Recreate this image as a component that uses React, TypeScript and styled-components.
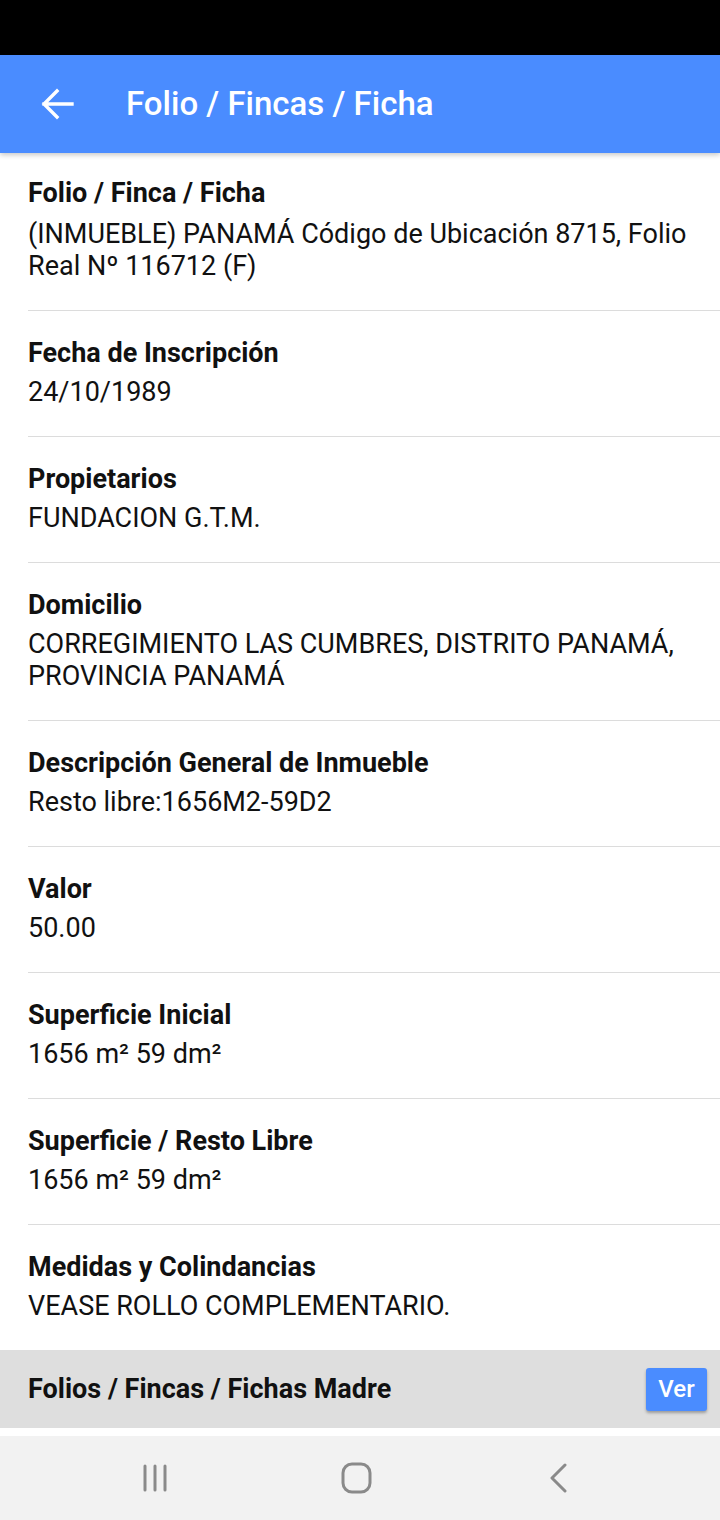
import React from "react";
import styled, { createGlobalStyle } from "styled-components";

const Global = createGlobalStyle`
  html, body { margin: 0; padding: 0; background: #ffffff; }
  body { font-family: Roboto, "Noto Sans", sans-serif; -webkit-font-smoothing: antialiased; }
  * { box-sizing: border-box; }
`;

const Screen = styled.div`
  width: 720px;
  height: 1520px;
  display: flex;
  flex-direction: column;
  background: #ffffff;
  overflow: hidden;
`;

const StatusBar = styled.div`
  height: 55px;
  flex: none;
  background: #000000;
`;

const Header = styled.header`
  height: 98px;
  flex: none;
  display: flex;
  align-items: center;
  background: #4a8cff;
  box-shadow: 0 2px 5px rgba(0, 0, 0, 0.22);
  position: relative;
  z-index: 2;
`;

const BackButton = styled.button`
  width: 126px;
  height: 98px;
  padding: 0 0 0 40px;
  border: 0;
  background: transparent;
  display: flex;
  align-items: center;
  cursor: pointer;
`;

const Title = styled.h1`
  margin: 0;
  color: #ffffff;
  font-size: 33px;
  font-weight: 500;
  line-height: 40px;
`;

const Content = styled.main`
  flex: 1;
  display: flex;
  flex-direction: column;
`;

const List = styled.div`
  padding-left: 28px;
  display: flex;
  flex-direction: column;
`;

const Item = styled.div<{ $first?: boolean }>`
  padding: ${(p) => (p.$first ? "23px 20px 28px 0" : "25px 20px 28px 0")};
  border-top: ${(p) => (p.$first ? "0" : "1px solid #dcdcdc")};
  display: flex;
  flex-direction: column;
  gap: ${(p) => (p.$first ? "8px" : "6px")};
`;

const Label = styled.div`
  color: #111111;
  font-size: 27px;
  font-weight: 700;
  line-height: 34px;
`;

const Value = styled.div`
  color: #111111;
  font-size: 27px;
  font-weight: 400;
  line-height: 32px;
`;

const MotherBar = styled.div`
  height: 78px;
  flex: none;
  background: #dedede;
  display: flex;
  align-items: center;
  justify-content: space-between;
  padding: 0 13px 0 28px;
`;

const MotherLabel = styled.div`
  color: #111111;
  font-size: 27px;
  font-weight: 700;
`;

const VerButton = styled.button`
  width: 61px;
  height: 43px;
  border: 0;
  border-radius: 3px;
  background: #4a8cff;
  color: #ffffff;
  font-family: Roboto, sans-serif;
  font-size: 24px;
  font-weight: 500;
  box-shadow: 0 2px 3px rgba(0, 0, 0, 0.3);
  padding: 0;
`;

const NavBar = styled.nav`
  height: 84px;
  flex: none;
  background: #f2f2f2;
  display: grid;
  grid-template-columns: repeat(3, 201px);
  align-items: center;
  padding-left: 55px;
`;

const NavSlot = styled.div`
  display: flex;
  justify-content: center;
`;

const items: { label: string; value: string[] }[] = [
  {
    label: "Folio / Finca / Ficha",
    value: ["(INMUEBLE) PANAMÁ Código de Ubicación 8715, Folio", "Real Nº 116712 (F)"],
  },
  { label: "Fecha de Inscripción", value: ["24/10/1989"] },
  { label: "Propietarios", value: ["FUNDACION G.T.M."] },
  {
    label: "Domicilio",
    value: ["CORREGIMIENTO LAS CUMBRES, DISTRITO PANAMÁ,", "PROVINCIA PANAMÁ"],
  },
  { label: "Descripción General de Inmueble", value: ["Resto libre:1656M2-59D2"] },
  { label: "Valor", value: ["50.00"] },
  { label: "Superficie Inicial", value: ["1656 m² 59 dm²"] },
  { label: "Superficie / Resto Libre", value: ["1656 m² 59 dm²"] },
  { label: "Medidas y Colindancias", value: ["VEASE ROLLO COMPLEMENTARIO."] },
];

export default function App() {
  return (
    <Screen>
      <Global />
      <StatusBar />
      <Header>
        <BackButton aria-label="Atrás">
          <svg width="34" height="34" viewBox="0 0 34 34" fill="none">
            <path
              d="M32 17H4M17 4L4 17l13 13"
              stroke="#ffffff"
              strokeWidth="3.4"
              strokeLinecap="square"
            />
          </svg>
        </BackButton>
        <Title>Folio / Fincas / Ficha</Title>
      </Header>
      <Content>
        <List>
          {items.map((it, i) => (
            <Item key={it.label} $first={i === 0}>
              <Label>{it.label}</Label>
              <Value>
                {it.value.map((v, j) => (
                  <div key={j}>{v}</div>
                ))}
              </Value>
            </Item>
          ))}
        </List>
        <MotherBar>
          <MotherLabel>Folios / Fincas / Fichas Madre</MotherLabel>
          <VerButton>Ver</VerButton>
        </MotherBar>
      </Content>
      <NavBar>
        <NavSlot>
          <svg width="28" height="30" viewBox="0 0 28 30" fill="none">
            <path d="M3 3v24M13 3v24M23 3v24" stroke="#8a8a8a" strokeWidth="3" strokeLinecap="round" />
          </svg>
        </NavSlot>
        <NavSlot>
          <svg width="32" height="32" viewBox="0 0 32 32" fill="none">
            <rect x="2" y="2" width="27" height="28" rx="9" stroke="#8a8a8a" strokeWidth="3" />
          </svg>
        </NavSlot>
        <NavSlot>
          <svg width="20" height="30" viewBox="0 0 20 30" fill="none">
            <path d="M17 2L4 15l13 13" stroke="#8a8a8a" strokeWidth="3" strokeLinecap="round" strokeLinejoin="round" />
          </svg>
        </NavSlot>
      </NavBar>
    </Screen>
  );
}
